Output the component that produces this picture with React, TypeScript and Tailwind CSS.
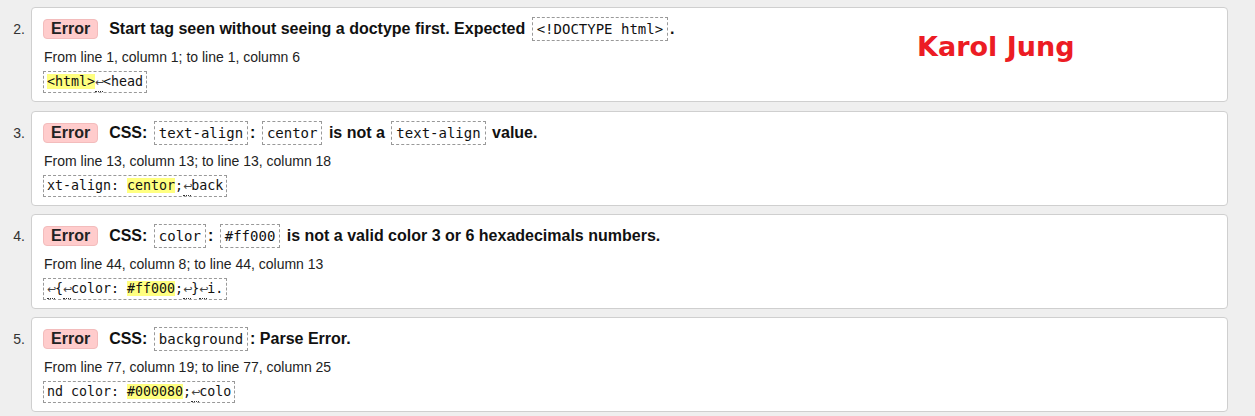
type Part =
  | { t: "text"; v: string }
  | { t: "code"; v: string }
  | { t: "hl"; v: string }
  | { t: "br" };

interface Msg {
  n: number;
  title: Part[];
  loc: string;
  extract: Part[];
}

const txt = (v: string): Part => ({ t: "text", v });
const code = (v: string): Part => ({ t: "code", v });
const hl = (v: string): Part => ({ t: "hl", v });
const br: Part = { t: "br" };

const messages: Msg[] = [
  {
    n: 2,
    title: [txt("Start tag seen without seeing a doctype first. Expected "), code("<!DOCTYPE html>"), txt(".")],
    loc: "From line 1, column 1; to line 1, column 6",
    extract: [hl("<html>"), br, txt("<head")],
  },
  {
    n: 3,
    title: [txt("CSS: "), code("text-align"), txt(": "), code("centor"), txt(" is not a "), code("text-align"), txt(" value.")],
    loc: "From line 13, column 13; to line 13, column 18",
    extract: [txt("xt-align: "), hl("centor"), txt(";"), br, txt("back")],
  },
  {
    n: 4,
    title: [txt("CSS: "), code("color"), txt(": "), code("#ff000"), txt(" is not a valid color 3 or 6 hexadecimals numbers.")],
    loc: "From line 44, column 8; to line 44, column 13",
    extract: [br, txt("{"), br, txt("color: "), hl("#ff000"), txt(";"), br, txt("}"), br, txt("i.")],
  },
  {
    n: 5,
    title: [txt("CSS: "), code("background"), txt(": Parse Error.")],
    loc: "From line 77, column 19; to line 77, column 25",
    extract: [txt("nd color: "), hl("#000080"), txt(";"), br, txt("colo")],
  },
];

// gaps between cards are uneven in the screenshot (9, 8, 8)
const gaps = ["", "mt-[9px]", "mt-[8px]", "mt-[8px]"];

function TitlePart({ p }: { p: Part }) {
  if (p.t === "code")
    return (
      <code className="mx-[2px] inline-block h-[24px] border border-dashed border-[#999] px-[4px] font-['DejaVu_Sans_Mono',monospace] text-[14px] font-normal leading-[22px] text-[#111]">
        {p.v}
      </code>
    );
  if (p.t === "text") return <span className="whitespace-pre">{p.v}</span>;
  return null;
}

function ExtractPart({ p }: { p: Part }) {
  if (p.t === "hl") return <span className="bg-[#ffff80]">{p.v}</span>;
  if (p.t === "br")
    return (
      <span className="relative inline-block w-[8px] text-center font-['DejaVu_Sans',sans-serif] text-[11px] leading-[20px] text-[#444]">
        ↩
        <span className="absolute bottom-[1px] left-[0px] right-[0px] border-b border-dotted border-[#333]" />
      </span>
    );
  if (p.t === "text" || p.t === "code") return <span>{p.v}</span>;
  return null;
}

function Card({ m, idx }: { m: Msg; idx: number }) {
  return (
    <li className={`flex ${gaps[idx]}`}>
      <span className="w-[31px] shrink-0 pr-[6px] pt-[13px] text-right text-[14px] leading-[18px] text-[#333]">
        {m.n}.
      </span>
      <div className="relative mr-[27px] flex-1 rounded-[4px] border border-[#cfcfcf] bg-white pb-[8px] pl-[11px] pt-[9px]">
        <div className="flex h-[24px] items-center text-[16px] font-bold text-[#111]">
          <span className="mr-[11px] rounded-[4px] border border-[#f3bcbc] bg-[#ffcccc] px-[7px] text-[16px] leading-[18px] text-[#222]">
            Error
          </span>
          {m.title.map((p, i) => (
            <TitlePart key={i} p={p} />
          ))}
        </div>
        <div className="mt-[7px] h-[18px] pl-[1px] text-[14px] leading-[18px] text-[#222]">{m.loc}</div>
        <div className="mt-[5px] flex">
          <div className="h-[22px] whitespace-pre border border-dashed border-[#999] px-[3px] font-['DejaVu_Sans_Mono',monospace] text-[13.3px] leading-[20px] text-[#111]">
            {m.extract.map((p, i) => (
              <ExtractPart key={i} p={p} />
            ))}
          </div>
        </div>
        {idx === 0 && (
          <span className="absolute left-[885px] top-[23px] font-['DejaVu_Sans',sans-serif] text-[27px] font-bold leading-[32px] text-[#ec1c24]">
            Karol Jung
          </span>
        )}
      </div>
    </li>
  );
}

export default function App() {
  return (
    <div className="min-h-screen bg-[#efefef] pt-[7px] font-['Liberation_Sans',Arial,sans-serif]">
      <ol>
        {messages.map((m, i) => (
          <Card key={m.n} m={m} idx={i} />
        ))}
      </ol>
    </div>
  );
}
